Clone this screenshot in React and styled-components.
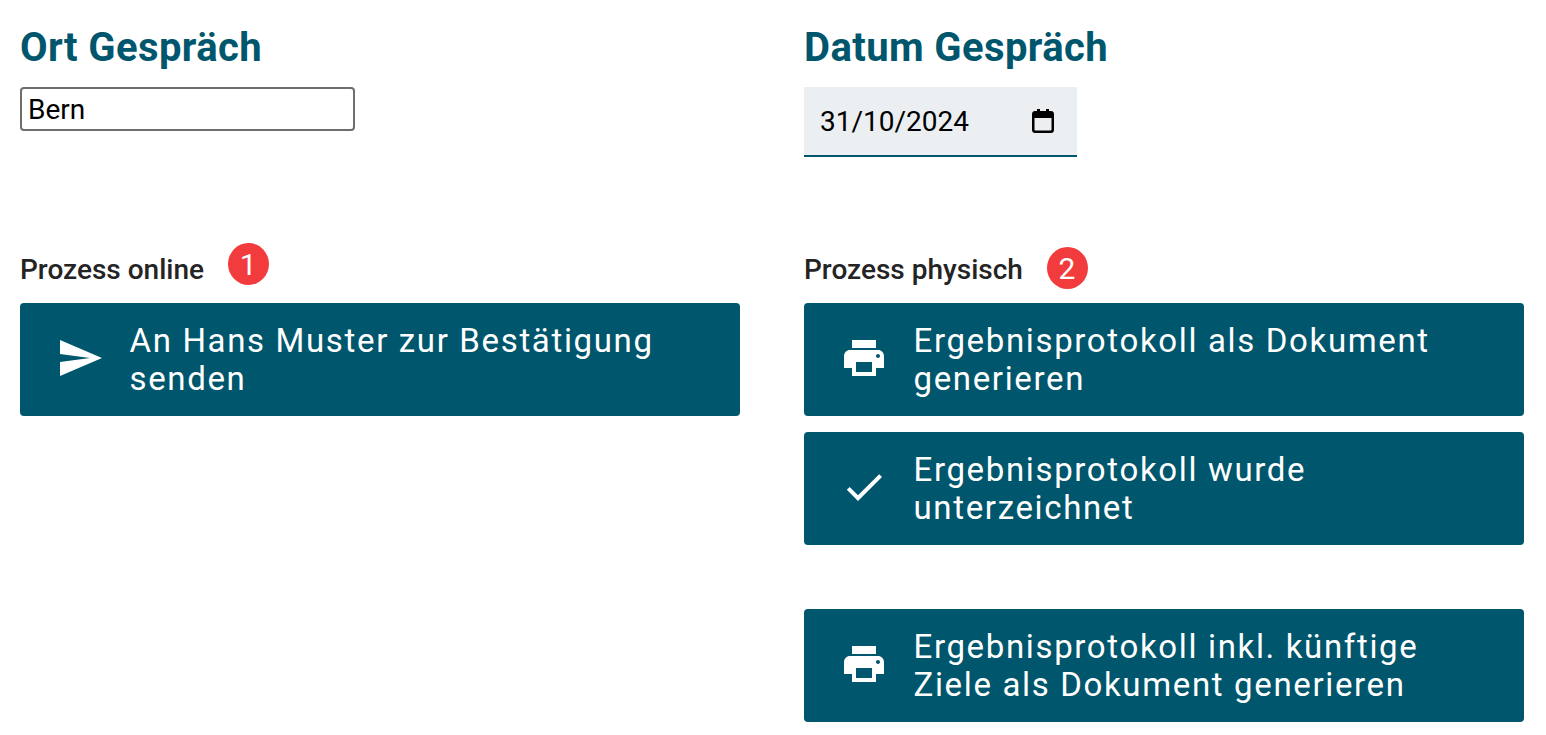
import styled, { createGlobalStyle } from 'styled-components';

const Global = createGlobalStyle`
    body {
        margin: 0;
        background: #fff;
        font-family: Roboto, sans-serif;
    }
`;

const SendIcon = () => (
    <svg viewBox="0 0 24 24" fill="currentColor">
        <path d="M2.01 21L23 12 2.01 3 2 10l15 2-15 2z" />
    </svg>
);

const PrintIcon = () => (
    <svg viewBox="0 0 24 24" fill="currentColor">
        <path d="M19 8H5c-1.66 0-3 1.34-3 3v6h4v4h12v-4h4v-6c0-1.66-1.34-3-3-3zm-3 11H8v-5h8v5zm3-7c-.55 0-1-.45-1-1s.45-1 1-1 1 .45 1 1-.45 1-1 1zm-1-9H6v4h12V3z" />
    </svg>
);

const CheckIcon = () => (
    <svg viewBox="0 0 24 24" fill="currentColor">
        <path d="M9 16.17L4.83 12l-1.42 1.41L9 19 21 7l-1.41-1.41z" />
    </svg>
);

const CalendarIcon = () => (
    <svg viewBox="0 0 22 24" fill="currentColor" fillRule="evenodd">
        <path d="M3 2h2V0h3v2h6V0h3v2h2c1.7 0 3 1.3 3 3v16c0 1.7-1.3 3-3 3H3c-1.7 0-3-1.300-3-3V5c0-1.700 1.300-3 3-3zm-.5 7v11.500c0 .6.400 1 1 1h15c.6 0 1-.4 1-1V9z" />
    </svg>
);

const App = () => (
    <>
        <Global />
        <Page>
            <Column>
                <Heading>Ort Gespräch</Heading>
                <TextInput defaultValue="Bern" />
            </Column>
            <Column>
                <Heading>Datum Gespräch</Heading>
                <DateField>
                    31/10/2024
                    <CalendarIcon />
                </DateField>
            </Column>
            <Column>
                <LabelRow>
                    <Label>Prozess online</Label>
                    <Badge $top={-5}>1</Badge>
                </LabelRow>
                <ActionButton>
                    <IconSlot><SendIcon /></IconSlot>
                    An Hans Muster zur Bestätigung senden
                </ActionButton>
            </Column>
            <Column>
                <LabelRow>
                    <Label>Prozess physisch</Label>
                    <Badge $top={-1}>2</Badge>
                </LabelRow>
                <ActionButton>
                    <IconSlot><PrintIcon /></IconSlot>
                    Ergebnisprotokoll als Dokument generieren
                </ActionButton>
                <ActionButton>
                    <IconSlot><CheckIcon /></IconSlot>
                    Ergebnisprotokoll wurde unterzeichnet
                </ActionButton>
                <Spacer />
                <ActionButton>
                    <IconSlot><PrintIcon /></IconSlot>
                    Ergebnisprotokoll inkl. künftige Ziele als Dokument generieren
                </ActionButton>
            </Column>
        </Page>
    </>
);

export default App;

const Page = styled.div`
    display: grid;
    grid-template-columns: 720px 720px;
    grid-template-rows: 222px auto;
    column-gap: 64px;
    padding: 26px 22px 0 20px;
`;

const Column = styled.div`
    display: flex;
    flex-direction: column;
    align-items: flex-start;
`;

const Heading = styled.h2`
    margin: 0 0 17px;
    font-size: 40px;
    line-height: 44px;
    font-weight: 700;
    letter-spacing: 0.4px;
    color: #00566c;
`;

const TextInput = styled.input`
    box-sizing: border-box;
    width: 335px;
    height: 44px;
    padding: 0 6px;
    border: 2px solid #6e6e6e;
    border-radius: 4px;
    font-family: Roboto, sans-serif;
    font-size: 28px;
    color: #000;
`;

const DateField = styled.div`
    box-sizing: border-box;
    display: flex;
    align-items: center;
    justify-content: space-between;
    width: 273px;
    height: 70px;
    padding: 0 23px 0 16px;
    background: #ebeff2;
    border-bottom: 2px solid #00566c;
    font-size: 28px;
    color: #000;

    svg {
        width: 22px;
        height: 24px;
    }
`;

const LabelRow = styled.div`
    display: flex;
    align-items: center;
    height: 42px;
    margin-bottom: 13px;
`;

const Label = styled.span`
    font-size: 28px;
    font-weight: 500;
    color: #242424;
`;

const Badge = styled.span`
    position: relative;
    top: ${({ $top }) => $top || 0}px;
    display: flex;
    align-items: center;
    justify-content: center;
    width: 41px;
    height: 42px;
    margin-left: 24px;
    padding-right: 1px;
    box-sizing: border-box;
    border-radius: 50%;
    background: #f13b3d;
    color: #fff;
    font-size: 30px;
    font-weight: 400;
`;

const ActionButton = styled.button`
    box-sizing: border-box;
    display: flex;
    align-items: center;
    width: 720px;
    height: 113px;
    margin-bottom: 16px;
    padding: 0 36px;
    border: 0;
    border-radius: 4px;
    background: #00566c;
    color: #fff;
    font-family: Roboto, sans-serif;
    font-size: 33px;
    line-height: 38px;
    letter-spacing: 1.65px;
    text-align: left;
`;

const IconSlot = styled.span`
    flex: none;
    display: flex;
    width: 48px;
    height: 48px;
    margin: 0 25.5px 4px 0;

    svg {
        width: 48px;
        height: 48px;
    }
`;

const Spacer = styled.div`
    height: 48px;
`;
